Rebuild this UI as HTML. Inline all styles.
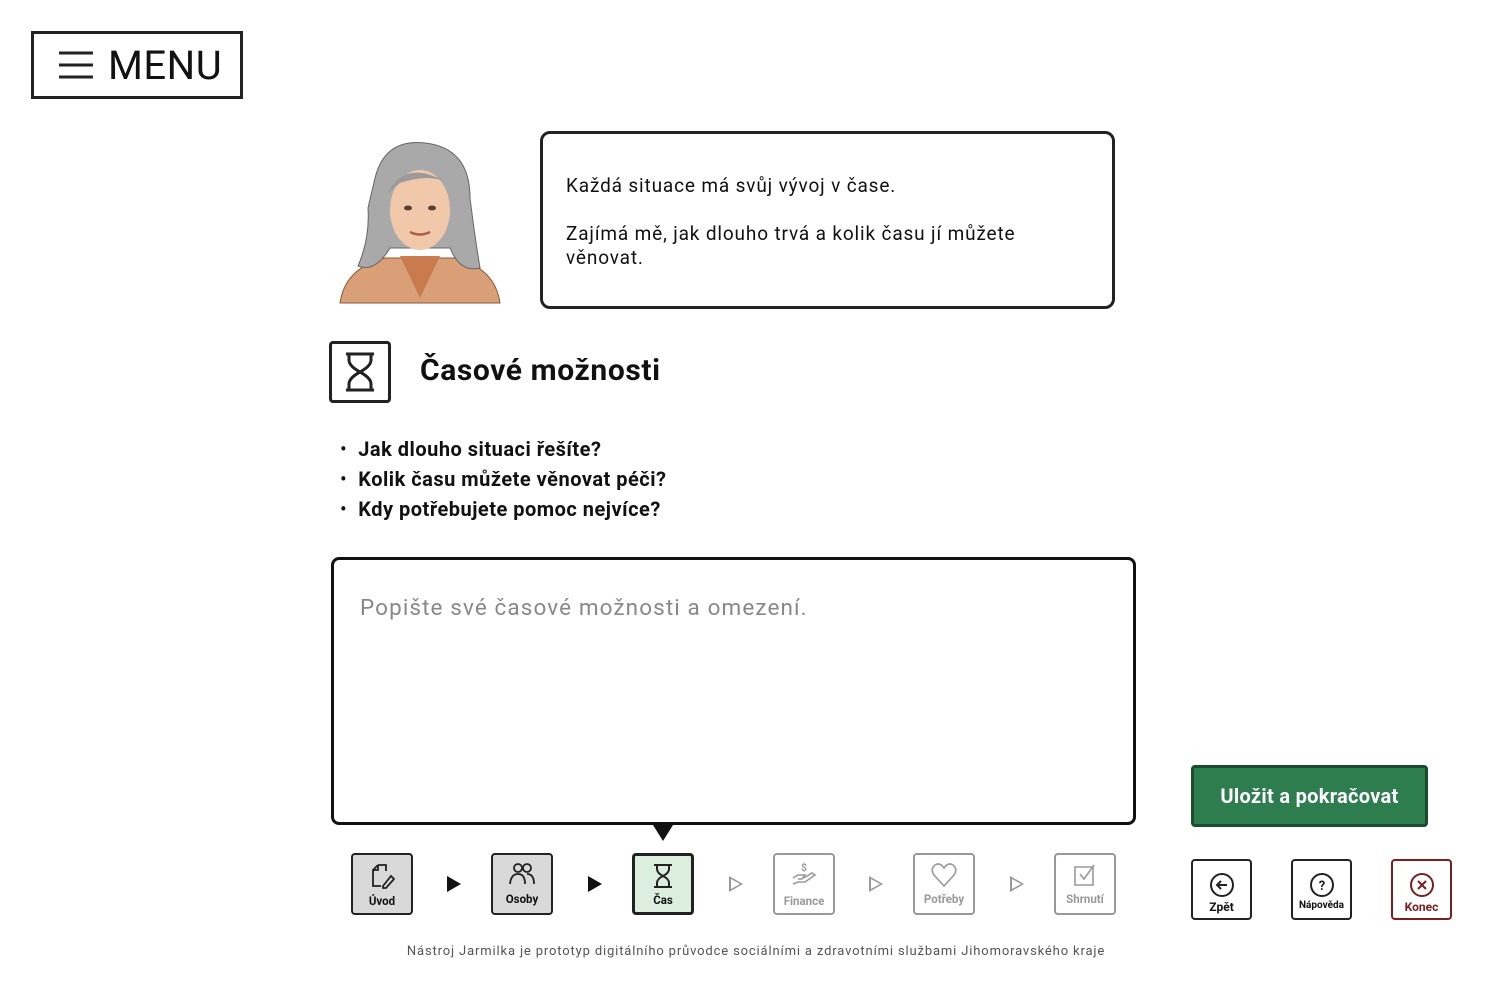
<!DOCTYPE html>
<html><head><meta charset="utf-8"><style>
*{box-sizing:border-box;margin:0;padding:0}
body{width:1512px;height:982px;background:#fff;font-family:"Roboto","Liberation Sans",sans-serif;color:#111;position:relative;overflow:hidden}
.a{position:absolute}
.menu{left:31px;top:31px;width:212px;height:68px;border:3px solid #222;display:flex;align-items:center}
.menu span{font-size:40px;margin-left:12px;letter-spacing:.5px}
.bubble{left:540px;top:131px;width:575px;height:178px;border:3px solid #222;border-radius:10px;padding:40px 80px 40px 23px;font-size:19px;line-height:24px;letter-spacing:.85px}
.h{left:420px;top:353px;font-size:30px;font-weight:bold;letter-spacing:.6px}
.ico{left:329px;top:341px;width:62px;height:62px;border:3px solid #222;border-radius:4px}
ul{position:absolute;left:340px;top:434px;list-style:none;font-size:20px;font-weight:bold;line-height:30px;letter-spacing:.5px}
ul li:before{content:"•";margin-right:11px;font-weight:normal}
.ta{left:331px;top:557px;width:805px;height:268px;border:3px solid #111;border-radius:8px;padding:35px 26px;font-size:22.5px;color:#888;letter-spacing:1.1px}
.st{position:absolute;top:853px;width:62px;height:62px;border:2px solid #222;border-radius:4px;background:#d9d9d9;font-size:11.5px;font-weight:bold;text-align:center}
.st svg{display:block;margin:7px auto 4px}
.st.off{border-color:#999;background:#fff;color:#999}
.st.cur{border:3px solid #222;background:#dcefdf}
.arr{position:absolute;top:876px;width:0;height:0;border-top:8px solid transparent;border-bottom:8px solid transparent;border-left:14px solid #111}
.arr.o{border-left-color:#999}
.arr.o:after{content:"";position:absolute;left:-12px;top:-5px;border-top:5px solid transparent;border-bottom:5px solid transparent;border-left:9px solid #fff}
.save{left:1191px;top:765px;width:237px;height:62px;background:#2e7d4f;border:3px solid #1a4d2e;border-radius:4px;color:#fff;font-size:20px;font-weight:bold;text-align:center;line-height:56px;letter-spacing:.3px}
.b{position:absolute;top:859px;width:61px;height:61px;border:2px solid #222;border-radius:4px;text-align:center;font-size:12px;font-weight:bold}
.b svg{display:block;margin:11px auto 2px}
.foot{left:0;width:1512px;top:944px;text-align:center;font-size:13px;color:#555;letter-spacing:.85px}
</style></head><body>
<div class="a menu"><svg width="40" height="40" viewBox="0 0 40 40" style="margin-left:22px"><path d="M3 8H37M3 20H37M3 32H37" stroke="#222" stroke-width="3"/></svg><span>MENU</span></div>

<svg class="a" style="left:330px;top:138px" width="180" height="166" viewBox="0 0 180 166">
<path d="M10 165 Q15 130 55 120 L125 120 Q165 130 170 165Z" fill="#d9a077" stroke="#8a5a3a"/>
<path d="M70 118 L90 160 L110 118Z" fill="#c97a4e"/>
<path d="M45 40 Q55 0 95 5 Q140 10 140 60 Q145 100 150 130 Q130 135 120 110 L60 110 Q45 135 28 128 Q40 100 38 70Z" fill="#a9a9a9" stroke="#666"/>
<ellipse cx="90" cy="72" rx="30" ry="40" fill="#f2c8aa"/>
<path d="M58 55 Q75 20 118 45 Q100 35 70 45Z" fill="#9a9a9a"/>
<ellipse cx="78" cy="70" rx="4" ry="2.5" fill="#5a4030"/><ellipse cx="102" cy="70" rx="4" ry="2.5" fill="#5a4030"/>
<path d="M80 94 Q90 99 100 94" stroke="#b05a50" stroke-width="2.5" fill="none"/>
</svg>

<div class="a bubble">Každá situace má svůj vývoj v čase.<br><br>Zajímá mě, jak dlouho trvá a kolik času jí můžete věnovat.</div>

<div class="a ico"><svg width="56" height="56" viewBox="0 0 56 56"><path d="M14 10H42M14 46H42M17 10V16Q17 22 28 28Q39 34 39 40V46M39 10V16Q39 22 28 28Q17 34 17 40V46" stroke="#222" stroke-width="3" fill="none"/></svg></div>
<div class="a h">Časové možnosti</div>
<ul><li>Jak dlouho situaci řešíte?</li><li>Kolik času můžete věnovat péči?</li><li>Kdy potřebujete pomoc nejvíce?</li></ul>

<div class="a ta">Popište své časové možnosti a omezení.</div>
<div class="a" style="left:653px;top:825px;border-left:10px solid transparent;border-right:10px solid transparent;border-top:16px solid #111"></div>

<div class="st" style="left:351px"><svg width="26" height="28" viewBox="0 0 26 28" fill="none" stroke="#222" stroke-width="1.8"><path d="M9 3H17V9M9 3L4 8V24H12M4 8H9V3"/><path d="M14 24L22 14L25 17L17 26H14Z"/></svg>Úvod</div>
<div class="arr" style="left:447px"></div>
<div class="st" style="left:491px"><svg width="28" height="26" viewBox="0 0 28 26" fill="none" stroke="#222" stroke-width="1.8"><circle cx="10" cy="6" r="4"/><circle cx="19" cy="6" r="4"/><path d="M2 22Q3 12 10 12Q17 12 17 22M19 12Q26 12 26 22"/></svg>Osoby</div>
<div class="arr" style="left:588px"></div>
<div class="st cur" style="left:632px"><svg width="24" height="26" viewBox="0 0 24 26" fill="none" stroke="#222" stroke-width="2"><path d="M3 2H21M3 24H21M6 2V6Q6 10 12 13Q18 16 18 20V24M18 2V6Q18 10 12 13Q6 16 6 20V24"/></svg>Čas</div>
<div class="arr o" style="left:729px"></div>
<div class="st off" style="left:773px"><svg width="28" height="28" viewBox="0 0 28 28" fill="none" stroke="#999" stroke-width="1.6"><text x="14" y="9" font-size="10" fill="#999" stroke="none" text-anchor="middle">$</text><path d="M3 16L8 13H15L12 17H8M3 22L8 20H15L25 13L22 11L14 16"/></svg>Finance</div>
<div class="arr o" style="left:869px"></div>
<div class="st off" style="left:913px"><svg width="28" height="26" viewBox="0 0 28 26" fill="none" stroke="#999" stroke-width="1.6"><path d="M14 24L4 13Q0 7 5 3Q10 0 14 6Q18 0 23 3Q28 7 24 13Z"/></svg>Potřeby</div>
<div class="arr o" style="left:1010px"></div>
<div class="st off" style="left:1054px"><svg width="26" height="26" viewBox="0 0 26 26" fill="none" stroke="#999" stroke-width="1.6"><path d="M3 5H21V23H3ZM8 12L12 17L22 3"/></svg>Shrnutí</div>

<div class="a save">Uložit a pokračovat</div>
<div class="b" style="left:1191px"><svg width="26" height="26" viewBox="0 0 26 26" fill="none" stroke="#222" stroke-width="2"><circle cx="13" cy="13" r="11"/><path d="M18 13H8M12 9L8 13L12 17"/></svg>Zpět</div>
<div class="b" style="left:1291px;font-size:10px"><svg width="26" height="26" viewBox="0 0 26 26" fill="none" stroke="#222" stroke-width="2"><circle cx="13" cy="13" r="11"/><text x="13" y="18" font-size="13" font-weight="bold" fill="#222" stroke="none" text-anchor="middle">?</text></svg>Nápověda</div>
<div class="b" style="left:1391px;border-color:#7a1f1f;color:#7a1f1f"><svg width="26" height="26" viewBox="0 0 26 26" fill="none" stroke="#7a1f1f" stroke-width="2"><circle cx="13" cy="13" r="11"/><path d="M9 9L17 17M17 9L9 17"/></svg>Konec</div>

<div class="a foot">Nástroj Jarmilka je prototyp digitálního průvodce sociálními a zdravotními službami Jihomoravského kraje</div>
</body></html>
